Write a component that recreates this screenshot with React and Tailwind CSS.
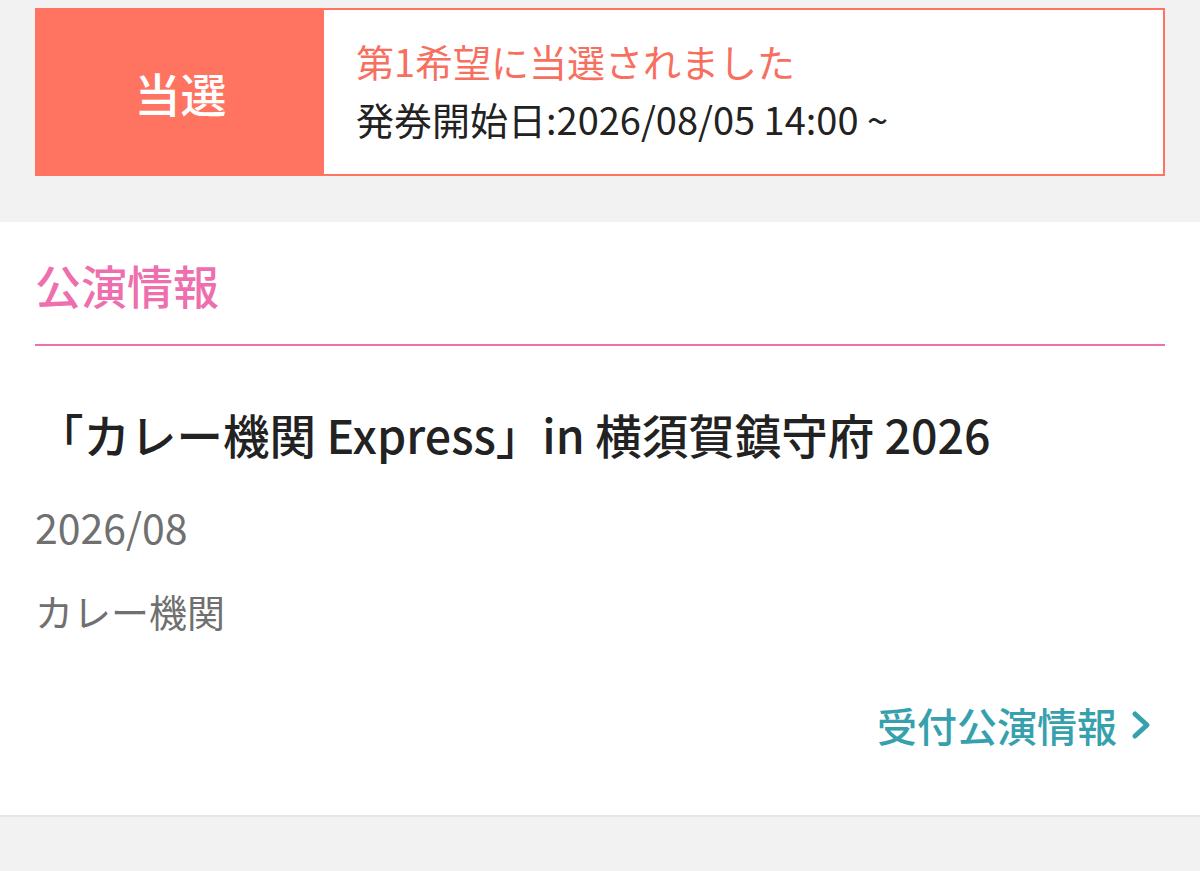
export default function App() {
  const font = { fontFamily: '"Noto Sans CJK JP", "Noto Sans", sans-serif' };
  return (
    <div className="min-h-[871px] w-[1200px] bg-[#f2f2f2]" style={font}>
      <div className="px-[35px] pt-[8px] pb-[46px]">
        <div className="flex h-[168px] border-2 border-[#fe7461] bg-white">
          <div className="flex w-[287px] items-center justify-center bg-[#fe7461] text-[46px] font-medium text-white">
            当選
          </div>
          <div className="flex flex-col justify-center pl-[32px]">
            <div className="-mt-[4px] text-[38px] leading-[58px] text-[#f7705f]">第1希望に当選されました</div>
            <div className="text-[38px] leading-[58px] text-[#222]">発券開始日:2026/08/05 14:00 ~</div>
          </div>
        </div>
      </div>
      <div className="border-b-2 border-[#e6e6e6] bg-white px-[35px] pb-[62px]">
        <div className="flex h-[124px] items-center border-b-2 border-[#eb72ad] text-[46px] font-medium text-[#ee6fae]">
          <span className="mt-[2px]">公演情報</span>
        </div>
        <div className="mt-[60px] pl-[2px] text-[46.5px] font-medium leading-[56px] text-[#222]">
          「カレー機関 Express」in 横須賀鎮守府 2026
        </div>
        <div className="mt-[36px] text-[41px] leading-[56px] text-[#707070]">2026/08</div>
        <div className="mt-[29px] text-[38px] leading-[56px] text-[#707070]">カレー機関</div>
        <div className="mt-[58px] flex items-center justify-end pr-[10px] text-[40px] font-medium leading-[56px] text-[#36a1ad]">
          <span>受付公演情報</span>
          <svg width="26" height="32" viewBox="0 0 26 32" className="ml-[12px]">
            <path d="M6 5 L18 16 L6 27" fill="none" stroke="#36a1ad" strokeWidth="5" strokeLinecap="round" strokeLinejoin="round" />
          </svg>
        </div>
      </div>
    </div>
  );
}
